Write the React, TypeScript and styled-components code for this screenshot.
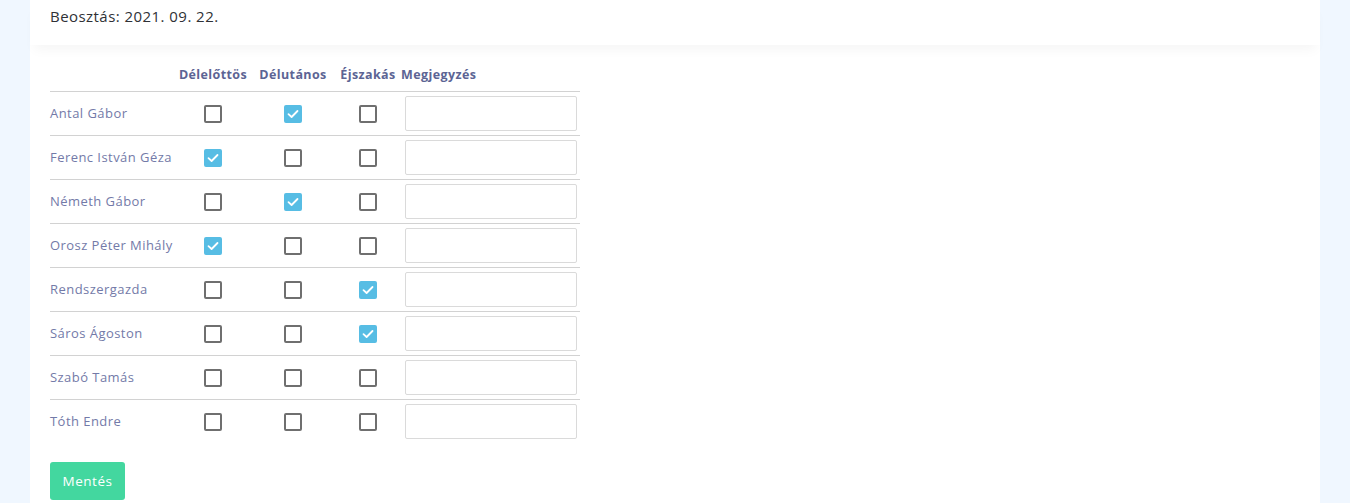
import { useState } from 'react'
import styled, { createGlobalStyle } from 'styled-components'

const GlobalStyle = createGlobalStyle`
  html, body {
    margin: 0;
    padding: 0;
    background: #f0f7ff;
    font-family: 'Open Sans', 'Liberation Sans', sans-serif;
  }
`

const Card = styled.div`
  margin: 0 30px;
  min-height: 503px;
  background: #fff;
`

const CardHeader = styled.div`
  height: 45px;
  box-sizing: border-box;
  padding: 6px 20px 0;
  font-size: 15px;
  letter-spacing: 0.45px;
  line-height: 20px;
  color: #2f3136;
  box-shadow: 0 9px 12px -4px rgb(0 0 0 / 4%);
  position: relative;
`

const CardBody = styled.div`
  padding: 0 20px 20px;
`

const Grid = styled.div`
  display: grid;
  grid-template-columns: 129px 68px 92px 58px 183px;
  width: 530px;
`

const HeadCell = styled.div<{ left?: boolean }>`
  height: 46px;
  box-sizing: border-box;
  display: flex;
  align-items: flex-end;
  justify-content: ${({ left }) => (left ? 'flex-start' : 'center')};
  padding: 0 0 6px ${({ left }) => (left ? '4px' : '0')};
  font-size: 12.5px;
  font-weight: 700;
  letter-spacing: 0.4px;
  line-height: 20px;
  color: #5c6494;
  white-space: nowrap;
`

const Cell = styled.div<{ left?: boolean }>`
  height: 44px;
  box-sizing: border-box;
  border-top: 1px solid #d2d2d2;
  display: flex;
  align-items: center;
  justify-content: ${({ left }) => (left ? 'flex-start' : 'center')};
`

const Name = styled(Cell)`
  padding-bottom: 2px;
  font-size: 13px;
  letter-spacing: 0.45px;
  color: #737aa8;
  white-space: nowrap;
`

const Box = styled.button<{ checked: boolean }>`
  width: 18px;
  height: 18px;
  padding: 0;
  box-sizing: border-box;
  border-radius: 2px;
  border: 2px solid ${({ checked }) => (checked ? '#57bde4' : '#6f6f6f')};
  background: ${({ checked }) => (checked ? '#57bde4' : '#fff')};
  display: flex;
  align-items: center;
  justify-content: center;
  cursor: pointer;
`

const Note = styled.input`
  margin-left: 8px;
  width: 172px;
  height: 35px;
  box-sizing: border-box;
  border: 1px solid #dadada;
  border-radius: 2px;
  outline: none;
`

const SaveButton = styled.button`
  margin-top: 19px;
  width: 75px;
  height: 38px;
  border: none;
  border-radius: 3px;
  background: #43d79f;
  color: #fff;
  font-family: inherit;
  font-size: 13.5px;
  letter-spacing: 0.5px;
`

const people = [
  ['Antal Gábor', 1],
  ['Ferenc István Géza', 0],
  ['Németh Gábor', 1],
  ['Orosz Péter Mihály', 0],
  ['Rendszergazda', 2],
  ['Sáros Ágoston', 2],
  ['Szabó Tamás', -1],
  ['Tóth Endre', -1],
] as const

const Check = () => (
  <svg width="12" height="12" viewBox="0 0 12 12">
    <path d="M1.5 6.2 L4.6 9 L10.5 3" fill="none" stroke="#fff" strokeWidth="1.8" strokeLinecap="round" strokeLinejoin="round" />
  </svg>
)

const App = () => {
  const [shifts, setShifts] = useState<number[]>(people.map((p) => p[1]))

  const toggle = (row: number, col: number) => {
    setShifts((cur) => cur.map((v, i) => (i === row ? (v === col ? -1 : col) : v)))
  }

  return (
    <>
      <GlobalStyle />
      <Card>
        <CardHeader>Beosztás: 2021. 09. 22.</CardHeader>
        <CardBody>
          <Grid>
            <HeadCell />
            <HeadCell>Délelőttös</HeadCell>
            <HeadCell>Délutános</HeadCell>
            <HeadCell>Éjszakás</HeadCell>
            <HeadCell left>Megjegyzés</HeadCell>
            {people.map(([name], row) => (
              <>
                <Name key={`n${row}`} left>
                  {name}
                </Name>
                {[0, 1, 2].map((col) => (
                  <Cell key={`c${row}-${col}`}>
                    <Box checked={shifts[row] === col} onClick={() => toggle(row, col)}>
                      {shifts[row] === col ? <Check /> : null}
                    </Box>
                  </Cell>
                ))}
                <Cell key={`m${row}`} left>
                  <Note />
                </Cell>
              </>
            ))}
          </Grid>
          <SaveButton>Mentés</SaveButton>
        </CardBody>
      </Card>
    </>
  )
}

export default App
